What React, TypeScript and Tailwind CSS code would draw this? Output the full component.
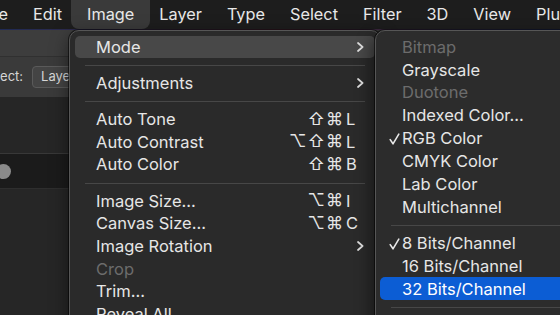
const menuBar = ['File', 'Edit', 'Image', 'Layer', 'Type', 'Select', 'Filter', '3D', 'View', 'Plugins'];

type Row =
  | { sep: true }
  | { sep?: false; label: string; mods?: string; key?: string; sub?: boolean; disabled?: boolean; active?: boolean };

const imageMenu: Row[] = [
  { label: 'Mode', sub: true, active: true },
  { sep: true },
  { label: 'Adjustments', sub: true },
  { sep: true },
  { label: 'Auto Tone', mods: '⇧⌘', key: 'L' },
  { label: 'Auto Contrast', mods: '⌥⇧⌘', key: 'L' },
  { label: 'Auto Color', mods: '⇧⌘', key: 'B' },
  { sep: true },
  { label: 'Image Size...', mods: '⌥⌘', key: 'I' },
  { label: 'Canvas Size...', mods: '⌥⌘', key: 'C' },
  { label: 'Image Rotation', sub: true },
  { label: 'Crop', disabled: true },
  { label: 'Trim...' },
  { label: 'Reveal All' },
];

type SubRow = { sep: true } | { sep?: false; label: string; checked?: boolean; disabled?: boolean; active?: boolean };

const modeMenu: SubRow[] = [
  { label: 'Bitmap', disabled: true },
  { label: 'Grayscale' },
  { label: 'Duotone', disabled: true },
  { label: 'Indexed Color...' },
  { label: 'RGB Color', checked: true },
  { label: 'CMYK Color' },
  { label: 'Lab Color' },
  { label: 'Multichannel' },
  { sep: true },
  { label: '8 Bits/Channel', checked: true },
  { label: '16 Bits/Channel' },
  { label: '32 Bits/Channel', active: true },
  { sep: true },
];

function Chevron() {
  return (
    <svg width="7" height="10" viewBox="0 0 7 10" className="shrink-0">
      <path d="M1 1 L5.6 5 L1 9" fill="none" stroke="#dedede" strokeWidth="1.7" strokeLinecap="round" strokeLinejoin="round" />
    </svg>
  );
}

function Check() {
  return (
    <svg width="11" height="12" viewBox="0 0 11 12" className="absolute left-[9px] top-[6px]">
      <path d="M1.2 6.6 L4 10.8 L9.8 1.2" fill="none" stroke="#e8e8e8" strokeWidth="1.6" strokeLinecap="round" strokeLinejoin="round" />
    </svg>
  );
}

export default function App() {
  return (
    <div className="relative w-[560px] h-[315px] overflow-hidden bg-[#262626] font-['Inter',sans-serif] flex flex-col">
      {/* menu bar */}
      <div className="h-[29px] bg-[#1d1d1d] flex items-center gap-[25px] text-[16.3px] leading-none text-[#e8e8e8] whitespace-nowrap shrink-0">
        {menuBar.map((m, i) =>
          m === 'Image' ? (
            <div key={m} className="-mx-[16px] px-[16px] h-[29px] -mt-[1px] flex items-center bg-[#3a3a3a] rounded-b-[8px]">
              <span className="mt-[1px]">{m}</span>
            </div>
          ) : (
            <span key={m} className={i === 0 ? '-ml-[19px]' : ''}>
              {m}
            </span>
          )
        )}
      </div>
      <div className="h-px bg-gradient-to-r from-[#1f2a55] via-[#4a2534] to-[#1f2a55] shrink-0" />

      {/* app window behind */}
      <div className="h-[27px] bg-[#3d3d3d] border-b border-[#303030] shrink-0" />
      <div className="h-[40px] bg-[#3a3a3a] flex items-center gap-[9px] text-[13px] text-[#d6d6d6] shrink-0 whitespace-nowrap">
        <span className="-ml-[19px]">Select:</span>
        <div className="h-[22px] px-[8px] flex items-center bg-[#444444] border border-[#5a5a5a] rounded-[4px] w-[120px]">
          Layer
        </div>
      </div>
      <div className="h-[57px] bg-[#262626] border-b border-[#383838] shrink-0" />
      <div className="h-[34px] bg-[#1b1b1b] flex items-center shrink-0">
        <div className="w-[15px] h-[15px] rounded-full bg-[#8a8a8a] -ml-[4.5px]" />
      </div>
      <div className="flex-1 bg-[#262626] border-t border-[#2e2e2e]" />

      {/* Image menu */}
      <div className="absolute left-[69px] top-[30px] w-[312px] h-[300px] bg-[#2a2a2a] border border-[#565656] rounded-t-[10px] pt-[4.5px] px-[5px] shadow-[0_0_0_1px_rgba(0,0,0,0.55),0_6px_18px_rgba(0,0,0,0.5)] text-[16.5px] leading-none text-[#e6e6e6] whitespace-nowrap">
        {imageMenu.map((r, i) =>
          r.sep ? (
            <div key={i} className="h-[13.5px] pt-[7px]">
              <div className="h-px bg-[#474747] mx-[10px]" />
            </div>
          ) : (
            <div
              key={i}
              className={`h-[22.7px] flex items-center justify-between pl-[21px] rounded-[5px] ${
                r.active ? 'bg-[#484848]' : ''
              } ${r.sub ? 'pr-[11px]' : 'pr-[17px]'}`}
            >
              <span className={r.disabled ? 'text-[#6c6c6c]' : ''}>{r.label}</span>
              {r.sub && <Chevron />}
              {r.mods && (
                <span className="flex items-center">
                  <span className="tracking-[1px] font-['Inter','DejaVu_Sans',sans-serif] text-[17px]">{r.mods}</span>
                  <span className="w-[12px] ml-[2px]">{r.key}</span>
                </span>
              )}
            </div>
          )
        )}
      </div>

      {/* Mode submenu */}
      <div className="absolute left-[375px] top-[30px] w-[200px] h-[300px] bg-[#2c2c2c] border border-[#565656] rounded-tl-[10px] pt-[4.5px] pl-[4px] shadow-[0_0_0_1px_rgba(0,0,0,0.55),-4px_6px_16px_rgba(0,0,0,0.45)] text-[16.5px] leading-none text-[#e6e6e6] whitespace-nowrap">
        {modeMenu.map((r, i) =>
          r.sep ? (
            <div key={i} className="h-[13.5px] pt-[7px]">
              <div className="h-px bg-[#474747] ml-[11px]" />
            </div>
          ) : (
            <div
              key={i}
              className={`relative h-[22.85px] flex items-center pl-[22px] rounded-[5px] ${
                r.active ? 'bg-[#0c5dd4] text-white' : ''
              }`}
            >
              {r.checked && <Check />}
              <span className={r.disabled ? 'text-[#6c6c6c]' : ''}>{r.label}</span>
            </div>
          )
        )}
      </div>
    </div>
  );
}
